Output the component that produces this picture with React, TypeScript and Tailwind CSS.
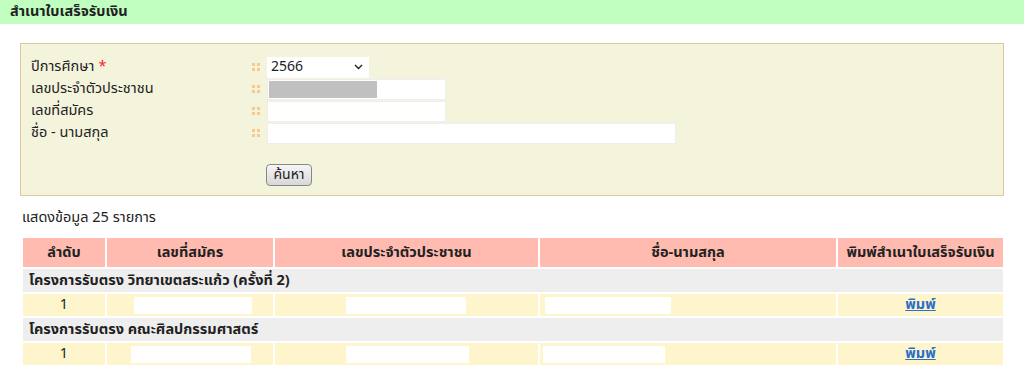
import React from "react";

const font = { fontFamily: 'Tahoma, "Noto Sans Thai", "Noto Sans", sans-serif' };

const Dots = () => (
  <span className="grid grid-cols-2 gap-[2px] w-[8px] mr-[7px]">
    <span className="w-[3px] h-[3px] bg-[#f7c98a]" />
    <span className="w-[3px] h-[3px] bg-[#f7c98a]" />
    <span className="w-[3px] h-[3px] bg-[#f7c98a]" />
    <span className="w-[3px] h-[3px] bg-[#f7c98a]" />
  </span>
);

const FormRow = ({ label, children, req }: { label: string; children: React.ReactNode; req?: boolean }) => (
  <div className="flex items-center h-[22px]">
    <div className="w-[221px]">
      {label}
      {req ? <span className="text-[#ff2020] ml-[4px]">*</span> : null}
    </div>
    <Dots />
    {children}
  </div>
);

const rows = [
  { group: "โครงการรับตรง วิทยาเขตสระแก้ว (ครั้งที่ 2)", boxes: ["ml-[27px] w-[118px]", "ml-[71px] w-[120px]", "ml-[5px] w-[126px]"] },
  { group: "โครงการรับตรง คณะศิลปกรรมศาสตร์", boxes: ["ml-[24px] w-[120px]", "ml-[71px] w-[123px]", "ml-[3px] w-[122px]"] },
];

export default function App() {
  return (
    <div className="w-[1024px] h-[386px] bg-white text-[14.5px] leading-[18px] text-[#222] overflow-hidden" style={font}>
      <div className="h-[24px] bg-[#c0ffc0] flex items-center pl-[10px] font-bold">สำเนาใบเสร็จรับเงิน</div>

      <div className="mx-[20px] mt-[19px] border border-[#e0c89c] bg-[#f4f4dc] pt-[12px] pb-[9px] pl-[10px]">
        <FormRow label="ปีการศึกษา" req>
          <div className="w-[102px] h-[21px] bg-white flex items-center justify-between pl-[4px] pr-[6px] text-[14px]">
            2566
            <svg width="9" height="6" viewBox="0 0 9 6"><path d="M1 1l3.5 3.5L8 1" stroke="#222" strokeWidth="1.4" fill="none" /></svg>
          </div>
        </FormRow>
        <FormRow label="เลขประจำตัวประชาชน">
          <div className="w-[179px] h-[21px] bg-white border border-[#eee] p-[1px]">
            <div className="w-[108px] h-full bg-[#c0c0c0]" />
          </div>
        </FormRow>
        <FormRow label="เลขที่สมัคร">
          <div className="w-[179px] h-[21px] bg-white border border-[#eee]" />
        </FormRow>
        <FormRow label="ชื่อ - นามสกุล">
          <div className="w-[409px] h-[21px] bg-white border border-[#eee]" />
        </FormRow>
        <div className="pl-[235px] mt-[20px]">
          <button className="h-[22px] w-[46px] border border-[#888] rounded-[4px] bg-gradient-to-b from-[#f6f6f6] to-[#d8d8d8] text-[14px] leading-[18px]">ค้นหา</button>
        </div>
      </div>

      <div className="pl-[22px] mt-[13px] h-[20px]">แสดงข้อมูล 25 รายการ</div>

      <table className="ml-[21px] mt-[7px] w-[984px] border-separate border-spacing-[2px] table-fixed">
        <colgroup>
          <col className="w-[82px]" />
          <col className="w-[166px]" />
          <col className="w-[263px]" />
          <col className="w-[296px]" />
          <col />
        </colgroup>
        <thead>
          <tr className="h-[29px] bg-[#ffbbb0]">
            <th className="font-bold">ลำดับ</th>
            <th className="font-bold">เลขที่สมัคร</th>
            <th className="font-bold">เลขประจำตัวประชาชน</th>
            <th className="font-bold">ชื่อ-นามสกุล</th>
            <th className="font-bold">พิมพ์สำเนาใบเสร็จรับเงิน</th>
          </tr>
        </thead>
        <tbody>
          {rows.map((r, i) => (
            <React.Fragment key={i}>
              <tr className="h-[23px] bg-[#eeeeee]">
                <td colSpan={5} className="font-bold pl-[6px]">{r.group}</td>
              </tr>
              <tr className="h-[22px] bg-[#fff5cc]">
                <td className="text-center">1</td>
                <td><div className={`h-[17px] bg-white ${r.boxes[0]}`} /></td>
                <td><div className={`h-[17px] bg-white ${r.boxes[1]}`} /></td>
                <td><div className={`h-[17px] bg-white ${r.boxes[2]}`} /></td>
                <td className="text-center">
                  <a href="#" className="text-[#2a6fc9] underline font-bold">พิมพ์</a>
                </td>
              </tr>
            </React.Fragment>
          ))}
        </tbody>
      </table>
    </div>
  );
}
